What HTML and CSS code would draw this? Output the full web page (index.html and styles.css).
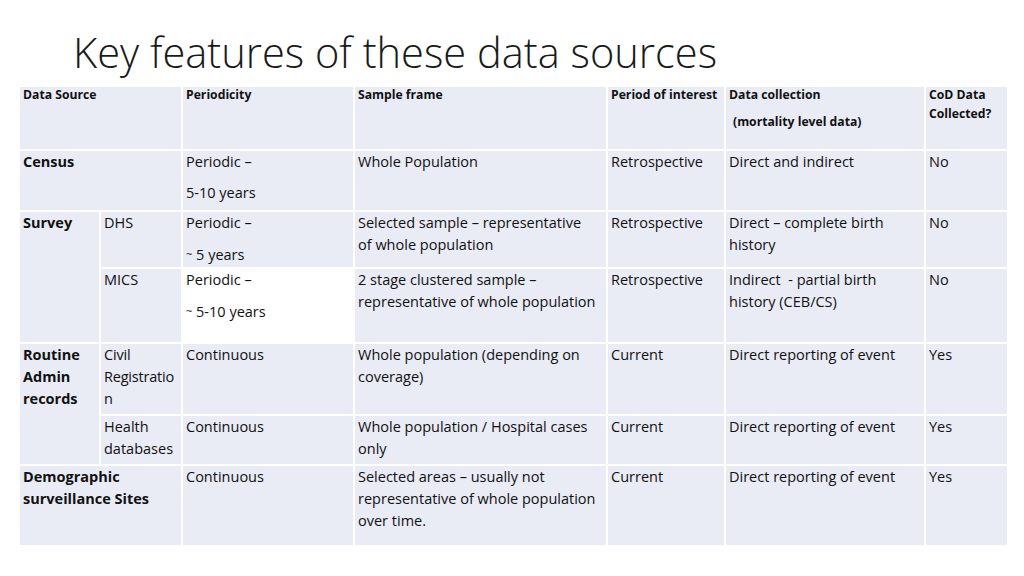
FILE: index.html
```html
<!DOCTYPE html>
<html lang="en">
<head>
<meta charset="utf-8">
<title>Key features of these data sources</title>
<link rel="stylesheet" href="styles.css">
</head>
<body>
<div class="slide">
  <h1 class="title">Key features of these data sources</h1>
  <table class="grid">
    <colgroup>
      <col class="c1"><col class="c2"><col class="c3"><col class="c4"><col class="c5"><col class="c6"><col class="c7">
    </colgroup>
    <thead>
      <tr class="r-head">
        <th colspan="2"><div class="hd">Data Source</div></th>
        <th><div class="hd">Periodicity</div></th>
        <th><div class="hd">Sample frame</div></th>
        <th><div class="hd">Period of interest</div></th>
        <th><div class="hd"><p>Data collection</p><p class="ind">(mortality level data)</p></div></th>
        <th><div class="hd">CoD Data Collected?</div></th>
      </tr>
    </thead>
    <tbody>
      <tr class="r-census">
        <td colspan="2" class="b">Census</td>
        <td><p>Periodic –</p><p>5-10 years</p></td>
        <td>Whole Population</td>
        <td>Retrospective</td>
        <td>Direct and indirect</td>
        <td>No</td>
      </tr>
      <tr class="r-dhs">
        <td rowspan="2" class="b">Survey</td>
        <td>DHS</td>
        <td><p>Periodic –</p><p><span class="tilde">~</span> 5 years</p></td>
        <td>Selected sample – representative of&nbsp;whole population</td>
        <td>Retrospective</td>
        <td>Direct – complete birth history</td>
        <td>No</td>
      </tr>
      <tr class="r-mics">
        <td>MICS</td>
        <td class="white"><p>Periodic –</p><p><span class="tilde">~</span> 5-10 years</p></td>
        <td>2 stage clustered sample – representative of whole population</td>
        <td>Retrospective</td>
        <td>Indirect &nbsp;- partial birth history (CEB/CS)</td>
        <td>No</td>
      </tr>
      <tr class="r-civil">
        <td rowspan="2" class="b">Routine Admin records</td>
        <td class="tight">Civil<br>Registratio<br>n</td>
        <td>Continuous</td>
        <td>Whole population (depending on coverage)</td>
        <td>Current</td>
        <td>Direct reporting of event</td>
        <td>Yes</td>
      </tr>
      <tr class="r-health">
        <td>Health databases</td>
        <td>Continuous</td>
        <td>Whole population / Hospital cases only</td>
        <td>Current</td>
        <td>Direct reporting of event</td>
        <td>Yes</td>
      </tr>
      <tr class="r-demo">
        <td colspan="2" class="b">Demographic surveillance Sites</td>
        <td>Continuous</td>
        <td>Selected areas – usually not representative of whole population over time.</td>
        <td>Current</td>
        <td>Direct reporting of event</td>
        <td>Yes</td>
      </tr>
    </tbody>
  </table>
</div>
</body>
</html>
```

FILE: styles.css
```css
html, body {
  margin: 0;
  padding: 0;
  background: #ffffff;
}

body {
  font-family: "Open Sans", "Noto Sans", "Liberation Sans", sans-serif;
  color: #111111;
}

.slide {
  width: 1024px;
  height: 576px;
  padding: 0 0 0 19px;
  box-sizing: border-box;
  overflow: hidden;
}

.title {
  margin: 0 0 0 54px;
  padding-top: 27px;
  height: 58px;
  box-sizing: border-box;
  font-weight: 300;
  font-size: 41.6px;
  line-height: 50px;
  letter-spacing: 0;
  color: #1a1a1a;
  white-space: nowrap;
}

.grid {
  margin-top: 27px;
  width: 989px;
  border-collapse: collapse;
  table-layout: fixed;
  margin-left: -1px;
}

.c1 { width: 81px; }
.c2 { width: 82px; }
.c3 { width: 172px; }
.c4 { width: 253px; }
.c5 { width: 118px; }
.c6 { width: 200px; }
.c7 { width: 83px; }

.grid th,
.grid td {
  background: #e9ebf5;
  border: 2px solid #ffffff;
  vertical-align: top;
  text-align: left;
  padding: 0 3px 0 3px;
}

.grid th {
  font-weight: 700;
  font-size: 12.2px;
  line-height: 19px;
}

.hd {
  margin-top: -2px;
}

.grid td {
  font-weight: 400;
  font-size: 14.5px;
  line-height: 22px;
}

.grid td > *:first-child,
.grid td {
  text-indent: 0;
}

.grid p {
  margin: 0 0 9px 0;
}

.grid th p {
  margin-bottom: 8px;
}

.grid p:last-child {
  margin-bottom: 0;
}

.grid .ind {
  padding-left: 4px;
}

.grid td.b {
  font-weight: 700;
}

.grid td.white {
  background: #ffffff;
}

.grid td.tight {
  padding-right: 0;
  letter-spacing: -0.2px;
}

.tilde {
  font-size: 11px;
  vertical-align: 2px;
}

.r-head { height: 64px; }
.r-census { height: 61px; }
.r-dhs { height: 57px; }
.r-mics { height: 75px; }
.r-civil { height: 72px; }
.r-health { height: 50px; }
.r-demo { height: 81px; }
```
